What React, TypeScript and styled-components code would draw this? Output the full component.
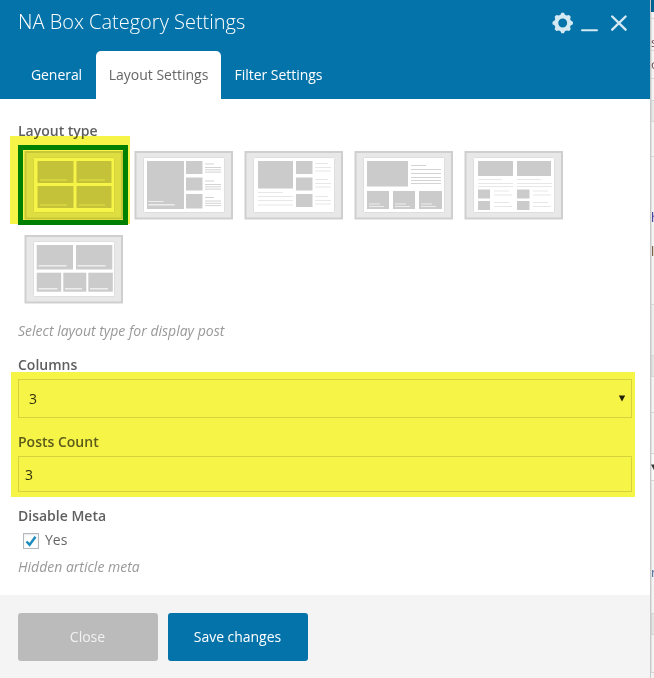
import React from 'react';
import styled, { createGlobalStyle } from 'styled-components';

const GlobalStyle = createGlobalStyle`
  * { box-sizing: border-box; }
  body { margin: 0; background: #fff; font-family: 'Open Sans', sans-serif; font-size: 14px; overflow: hidden; }
`;

const Screen = styled.div`
  display: flex;
  width: 654px;
  height: 678px;
  overflow: hidden;
`;

const Dialog = styled.section`
  display: flex;
  flex-direction: column;
  width: 650px;
  flex: none;
  background: #fff;
`;

const Header = styled.header`
  display: flex;
  flex: none;
  flex-direction: column;
  justify-content: space-between;
  height: 99px;
  background: #0473aa;
  color: #fff;
`;

const TitleBar = styled.div`
  display: flex;
  justify-content: space-between;
  height: 46px;
  padding: 0 20px 0 18px;
`;

const Title = styled.h1`
  margin: 0;
  font-size: 20px;
  font-weight: 300;
  line-height: 43px;
  color: #fff;
`;

const Controls = styled.div`
  display: flex;
  padding-top: 11px;
`;

const Tabs = styled.nav`
  display: flex;
  height: 48px;
  padding-left: 17px;
`;

const Tab = styled.button<{ $active?: boolean; $width: number }>`
  width: ${p => p.$width}px;
  border: 0;
  padding: 0;
  border-radius: 5px 5px 0 0;
  background: ${p => (p.$active ? '#fff' : 'transparent')};
  color: ${p => (p.$active ? '#666' : '#fff')};
  font: ${p => (p.$active ? 400 : 500)} 14px 'Open Sans', sans-serif;
  letter-spacing: ${p => (p.$active ? 0 : -0.04)}px;
  line-height: 48px;
  white-space: nowrap;
`;

const Body = styled.main`
  display: flex;
  flex: none;
  flex-direction: column;
  height: 496px;
  padding: 22px 18px 0;
`;

const Label = styled.label`
  display: block;
  height: 20px;
  line-height: 20px;
  font-weight: 600;
  color: #5f5f5f;
`;

const Hint = styled.p`
  margin: 0;
  line-height: 20px;
  font-style: italic;
  color: #999;
`;

const LayoutGrid = styled.div`
  display: grid;
  grid-template-columns: repeat(5, 110px);
  grid-auto-rows: 80px;
  row-gap: 4px;
  margin: 4px 0 12px;
`;

const LayoutOption = styled.div<{ $selected?: boolean }>`
  position: relative;
  padding: 5px;
  ${p => p.$selected && '&::after { content: ""; position: absolute; inset: 0; border: 5px solid #008000; }'}
  svg { display: block; }
`;

const Marker = styled.div<{ $inset: string }>`
  position: absolute;
  inset: ${p => p.$inset};
  background: #f6f446;
  mix-blend-mode: multiply;
  pointer-events: none;
`;

const ColumnsLabel = styled(Label)`
  margin-top: 14px;
`;

const FieldGroup = styled.div`
  position: relative;
  margin-top: 4px;
`;

const Field = styled.div<{ $height: number; $pad: number }>`
  display: flex;
  align-items: center;
  justify-content: space-between;
  height: ${p => p.$height}px;
  padding: 0 5px 0 ${p => p.$pad}px;
  border: 1px solid #ddd;
  color: #333;
`;

const CountLabel = styled(Label)`
  margin: 14px 0 4px;
`;

const MetaLabel = styled(Label)`
  margin-top: 14px;
`;

const CheckRow = styled.div`
  display: flex;
  align-items: center;
  gap: 6px;
  height: 28px;
  margin-bottom: 3px;
  padding-left: 5px;
  line-height: 17px;
  color: #666;
`;

const CheckText = styled.span`
  padding-bottom: 2px;
`;

const Checkbox = styled.span`
  display: flex;
  align-items: center;
  justify-content: center;
  width: 16px;
  height: 16px;
  margin-top: 2px;
  border: 1px solid #b4b9be;
  box-shadow: inset 0 1px 2px rgba(0, 0, 0, 0.1);
`;

const Footer = styled.footer`
  display: flex;
  gap: 10px;
  flex: 1;
  padding: 18px 18px 0;
  background: #f4f4f4;
`;

const Button = styled.button<{ $primary?: boolean }>`
  width: 140px;
  height: 48px;
  padding: 0 1px 2px 0;
  border: 0;
  border-radius: 3px;
  background: ${p => (p.$primary ? '#0473aa' : '#bbb')};
  color: ${p => (p.$primary ? '#fff' : '#f1f1f1')};
  font: ${p => (p.$primary ? 500 : 400)} 14px 'Open Sans', sans-serif;
  letter-spacing: ${p => (p.$primary ? -0.04 : 0)}px;
`;

const PageEdge = styled.aside`
  width: 4px;
  flex: none;
  overflow: hidden;
  background: #f4f4f4;
  border-left: 1px solid #c8c8c8;
`;

const EdgeRow = styled.div<{ $h: number; $bg?: string; $ink?: string; $top?: number; $plain?: boolean }>`
  display: flex;
  height: ${p => p.$h}px;
  padding-top: ${p => p.$top || 0}px;
  border-bottom: ${p => (p.$plain ? 0 : 1)}px solid #d5d5d5;
  background: ${p => p.$bg || 'transparent'};
  box-shadow: inset 1px 0 0 rgba(0, 0, 0, 0.08);
  color: ${p => p.$ink || '#444'};
  font-size: 13px;
  line-height: 18px;
`;

type Box = [number, number, number, number];
interface LayoutArt { boxes: Box[]; lines?: Box[]; captions?: Box[]; faint?: boolean }

// Boxes are x, y, width, height inside a 100 x 70 thumbnail.
const layouts: LayoutArt[] = [
  {
    boxes: [[14.5, 11, 36, 22], [53.5, 11, 35, 22], [14.5, 36, 36, 22], [53.5, 36, 35, 22]],
    captions: [[17, 29.5, 27, 1], [56, 29.5, 26, 1], [17, 54.5, 27, 1], [56, 54.5, 26, 1]],
  },
  {
    boxes: [[14, 11, 37, 48], [53, 11, 16.5, 13], [53, 27.5, 16.5, 13], [53, 44, 16.5, 14.5]],
    lines: [11, 28, 44.5].flatMap((y): Box[] => [[72, y + 2.5, 9, 1], [72, y + 6, 16, 1], [72, y + 8.3, 16, 1], [72, y + 10.6, 16, 1]]),
    captions: [[15.5, 51, 15, 1], [15.5, 54, 26, 1.5]],
  },
  {
    boxes: [[15, 11, 35, 27.5], [53, 11, 16.5, 13], [53, 27.5, 16.5, 13], [53, 44, 16.5, 13]],
    lines: [
      ...[13, 29, 46].flatMap((y): Box[] => [[72, y, 13, 1], [72, y + 4, 16, 1], [72, y + 7.5, 16, 1]]),
      [15, 42, 25, 1], [15, 46, 35, 1], [15, 50, 35, 1], [15, 54.5, 35, 1],
    ],
    faint: true,
  },
  {
    boxes: [[14, 11, 41, 25.5], [14, 41, 22, 18], [40, 41, 22, 18], [66, 41, 23, 18]],
    lines: [[58, 15, 15, 1], [58, 19, 30, 1], [58, 23, 30, 1], [58, 27, 30, 1], [58, 30, 30, 1], [58, 33, 30, 1]],
    captions: [[16, 53.5, 11, 1], [16, 56, 15, 1], [42, 53.5, 11, 1], [42, 56, 15, 1], [68, 53.5, 11, 1], [68, 56, 15, 1]],
  },
  {
    boxes: [[15, 11, 35, 15], [54, 11, 34, 15], [15, 39.5, 12, 9], [54, 39.5, 12.5, 9], [15, 51, 12, 9], [54, 51, 12.5, 9]],
    lines: [
      ...[15, 54].flatMap((x): Box[] => [[x, 29, 24, 1], [x, 33, 35, 1], [x, 36, 35, 1]]),
      ...[31, 70].flatMap((x): Box[] => [[x, 40.5, 15, 1], [x, 44.5, 18, 1], [x, 52, 15, 1], [x, 56, 18, 1]]),
    ],
    faint: true,
  },
  {
    boxes: [[13.7, 11, 36.3, 24.5], [53, 11, 36.3, 24.5], [13.7, 38.7, 24.5, 19], [40.3, 38.7, 23, 19], [65.3, 38.7, 24.5, 19]],
    captions: [[15.5, 31, 28, 1.5], [54.5, 31, 28, 1.5], [15.5, 54, 19, 1.5], [42, 54, 17, 1.5], [67, 54, 18, 1.5]],
  },
];

const Rects = ({ items, fill }: { items?: Box[]; fill: string }) => (
  <>{(items || []).map(([x, y, w, h], i) => <rect key={i} x={x} y={y} width={w} height={h} fill={fill} />)}</>
);

const LayoutThumb = ({ art }: { art: LayoutArt }) => (
  <svg width="100" height="70" viewBox="0 0 100 70">
    <rect x="2.5" y="2" width="96.5" height="66.5" fill="#e8e8e8" stroke="#cfcfcf" strokeWidth="2" />
    <rect x="10.5" y="7.5" width="81" height="55" rx="1" fill="#fff" stroke="#dedede" />
    <Rects items={art.boxes} fill="#cbcbcb" />
    <Rects items={art.lines} fill={art.faint ? '#e7e7e7' : '#d3d3d3'} />
    <Rects items={art.captions} fill="#ededed" />
  </svg>
);

const WindowIcons = () => (
  <svg width="80" height="24" viewBox="0 0 80 24" fill="none" stroke="#d5e9f3">
    <circle cx="12.7" cy="12" r="6.4" strokeWidth="3.9" />
    {[0, 45, 90, 135, 180, 225, 270, 315].map(a => (
      <path key={a} d="M9.7 4.9 L11.5 1.8 H13.9 L15.7 4.9Z" fill="#d5e9f3" stroke="none" transform={`rotate(${a} 12.7 12)`} />
    ))}
    <path d="M32 19.2H47" strokeWidth="2" strokeLinecap="round" />
    <path d="M62.2 5.5L75.6 18.7M75.6 5.5L62.2 18.7" strokeWidth="2.4" strokeLinecap="round" />
  </svg>
);

interface EdgeItem { h: number; bg?: string; text?: string; ink?: string; top?: number; plain?: boolean }
const edgeRows: EdgeItem[] = [
  { h: 12, bg: '#006497', plain: true }, { h: 7 },
  { h: 32, text: 's', ink: '#70404b', top: 14 }, { h: 28, text: 'o', ink: '#775555', top: 4 },
  { h: 22 }, { h: 21, bg: '#e8e8e8' }, { h: 35 },
  { h: 80, text: 'h', ink: '#38329a', top: 51, plain: true }, { h: 68, text: 'l', ink: '#705030', top: 5 },
  { h: 51, bg: '#eeeeee' }, { h: 21, bg: '#e4e4e4' }, { h: 36 }, { h: 41 },
  { h: 27, text: '▾', ink: '#333333', top: 3, bg: '#fafafa' },
  { h: 133, text: 'n', ink: '#4b6c9b', top: 82 }, { h: 21, bg: '#e4e4e4' }, { h: 38 },
];

export default function App() {
  return (
    <Screen>
      <GlobalStyle />
      <Dialog>
        <Header>
          <TitleBar>
            <Title>NA Box Category Settings</Title>
            <Controls><WindowIcons /></Controls>
          </TitleBar>
          <Tabs>
            <Tab $width={79}>General</Tab>
            <Tab $width={125} $active>Layout Settings</Tab>
            <Tab $width={115}>Filter Settings</Tab>
          </Tabs>
        </Header>
        <Body>
          <Label>Layout type</Label>
          <LayoutGrid>
            {layouts.map((art, i) => (
              <LayoutOption key={i} $selected={i === 0}>
                <LayoutThumb art={art} />
                {i === 0 && <Marker $inset="-9px -2px 1px -8px" />}
              </LayoutOption>
            ))}
          </LayoutGrid>
          <Hint>Select layout type for display post</Hint>
          <ColumnsLabel>Columns</ColumnsLabel>
          <FieldGroup>
            <Field $height={39} $pad={10}>
              <span>3</span>
              <svg width="8" height="8" viewBox="0 0 8 8"><path d="M0.8 0.5H7.2L4 6.5Z" fill="#222" /></svg>
            </Field>
            <CountLabel>Posts Count</CountLabel>
            <Field $height={36} $pad={6}><span>3</span></Field>
            <Marker $inset="-7px -3px -5px -7px" />
          </FieldGroup>
          <MetaLabel>Disable Meta</MetaLabel>
          <CheckRow>
            <Checkbox>
              <svg width="12" height="12" viewBox="0 0 12 12"><path d="M1.5 6.5L4.6 9.8L10.5 1.8" fill="none" stroke="#1e8cbe" strokeWidth="2.5" /></svg>
            </Checkbox>
            <CheckText>Yes</CheckText>
          </CheckRow>
          <Hint>Hidden article meta</Hint>
        </Body>
        <Footer>
          <Button>Close</Button>
          <Button $primary>Save changes</Button>
        </Footer>
      </Dialog>
      <PageEdge>
        {edgeRows.map((r, i) => (
          <EdgeRow key={i} $h={r.h} $bg={r.bg} $ink={r.ink} $top={r.top} $plain={r.plain}>{r.text}</EdgeRow>
        ))}
      </PageEdge>
    </Screen>
  );
}
